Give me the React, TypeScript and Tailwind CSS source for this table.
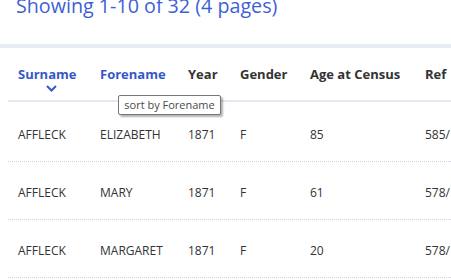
import React from "react";

const rows = [
  ["AFFLECK", "ELIZABETH", "1871", "F", "85", "585/"],
  ["AFFLECK", "MARY", "1871", "F", "61", "578/"],
  ["AFFLECK", "MARGARET", "1871", "F", "20", "578/"],
];

const cols = "grid grid-cols-[82px_88px_52px_70px_115px_1fr]";

export default function App() {
  return (
    <div
      className="relative w-[451px] h-[280px] overflow-hidden bg-white"
      style={{ fontFamily: '"Open Sans", "Noto Sans", sans-serif' }}
    >
      <div className="flex items-start h-[44px] pl-[16px]">
        <div className="mt-[-9px] text-[19.7px] leading-[30px] text-[#3d5fd6] whitespace-nowrap">
          Showing 1-10 of 32 (4 pages)
        </div>
      </div>
      <div className="h-[4px] bg-[#e8edf3]" />
      <div className="ml-[8px]">
        <div className={`${cols} h-[54px] pt-[17px] border-b-[2px] border-[#e4e8f3] text-[13px] leading-[18px] font-bold text-[#333]`}>
          <div className="px-[10px] text-[#3558c9]">
            <div>Surname</div>
            <svg width="11" height="7" viewBox="0 0 11 7" className="ml-[28px] mt-[2px]">
              <polyline points="1,1 5.5,5.5 10,1" fill="none" stroke="#3558c9" strokeWidth="2" />
            </svg>
          </div>
          <div className="px-[10px] text-[#3558c9]">Forename</div>
          <div className="px-[10px]">Year</div>
          <div className="px-[10px]">Gender</div>
          <div className="px-[10px] whitespace-nowrap">Age at Census</div>
          <div className="px-[10px]">Ref</div>
        </div>
        <div className="mt-[2px]">
          {rows.map((r, i) => (
            <div
              key={i}
              className={`${cols} h-[58px] pt-[23px] border-b border-dotted border-[#c9d3ea] text-[12px] leading-[16px] text-[#333]`}
            >
              {r.map((c, j) => (
                <div key={j} className="px-[10px] whitespace-nowrap">
                  {c}
                </div>
              ))}
            </div>
          ))}
        </div>
      </div>
      <div className="absolute left-[118px] top-[95px] h-[20px] w-[103px] border border-[#767676] bg-white shadow-[2px_2px_2px_rgba(0,0,0,0.3)] rounded-[2px] flex items-center justify-center text-[11px] text-[#4a4a4a] whitespace-nowrap">
        sort by Forename
      </div>
    </div>
  );
}
